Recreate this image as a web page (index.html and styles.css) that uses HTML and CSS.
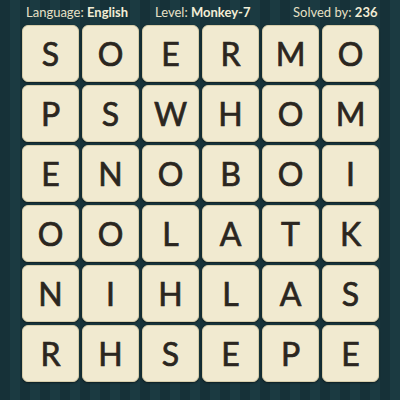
FILE: index.html
```html
<!DOCTYPE html>
<html>
<head>
<meta charset="utf-8">
<link rel="stylesheet" href="styles.css">
</head>
<body>
<div class="page">
  <div class="header">
    <span class="item">Language: <b>English</b></span>
    <span class="item">Level: <b>Monkey-7</b></span>
    <span class="item">Solved by: <b>236</b></span>
  </div>
  <div class="grid">
    <div class="tile">S</div><div class="tile">O</div><div class="tile">E</div><div class="tile">R</div><div class="tile">M</div><div class="tile">O</div>
    <div class="tile">P</div><div class="tile">S</div><div class="tile">W</div><div class="tile">H</div><div class="tile">O</div><div class="tile">M</div>
    <div class="tile">E</div><div class="tile">N</div><div class="tile">O</div><div class="tile">B</div><div class="tile">O</div><div class="tile">I</div>
    <div class="tile">O</div><div class="tile">O</div><div class="tile">L</div><div class="tile">A</div><div class="tile">T</div><div class="tile">K</div>
    <div class="tile">N</div><div class="tile">I</div><div class="tile">H</div><div class="tile">L</div><div class="tile">A</div><div class="tile">S</div>
    <div class="tile">R</div><div class="tile">H</div><div class="tile">S</div><div class="tile">E</div><div class="tile">P</div><div class="tile">E</div>
  </div>
</div>
</body>
</html>
```
FILE: styles.css
```css
html, body {
  margin: 0;
  padding: 0;
}
body {
  width: 400px;
  height: 400px;
  overflow: hidden;
  background-color: #163138;
  background-image: repeating-linear-gradient(90deg, #163138 0px, #163138 10px, #1b3a41 10px, #1b3a41 20px);
  font-family: Lato, "Open Sans", sans-serif;
}
.page {
  display: flex;
  flex-direction: column;
}
.header {
  height: 25px;
  display: grid;
  grid-template-columns: 129px 138px auto;
  align-items: center;
  padding: 0 0 2px 26px;
  box-sizing: border-box;
  color: #e6e0c6;
  font-size: 13px;
  white-space: nowrap;
}
.header b {
  font-weight: 700;
  color: #f2edd6;
}
.grid {
  display: grid;
  grid-template-columns: repeat(6, 57px);
  grid-auto-rows: 57px;
  gap: 3px;
  padding-left: 22px;
}
.tile {
  background: #f1ead0;
  border-radius: 6px;
  border: 1px solid #d6cdaa;
  box-sizing: border-box;
  box-shadow: 0 1px 2px rgba(0,0,0,0.45);
  display: flex;
  align-items: center;
  justify-content: center;
  color: #2b2620;
  font-size: 32px;
  font-weight: 400;
  -webkit-text-stroke: 0.7px #2b2620;
}
```
